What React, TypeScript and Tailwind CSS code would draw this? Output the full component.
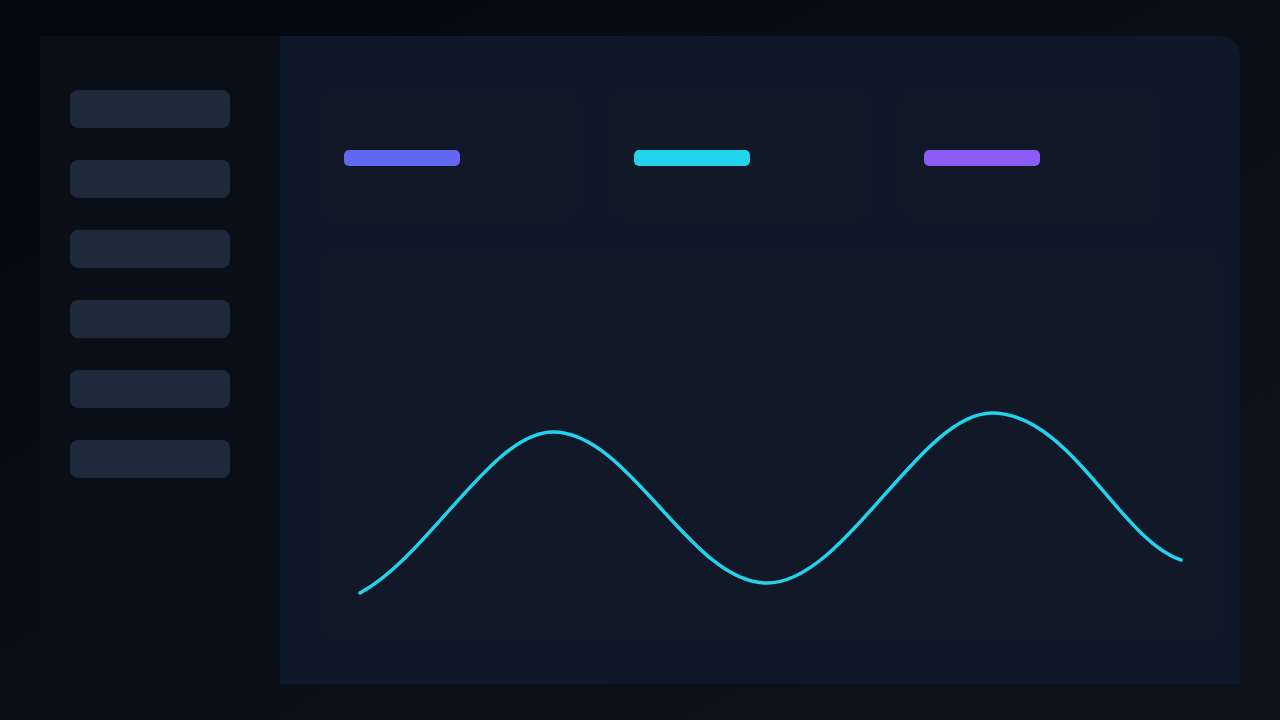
import React from "react";

export default function App() {
  const items = [0, 1, 2, 3, 4, 5];
  const bars = ["bg-[#6366f1]", "bg-[#22d3ee]", "bg-[#8b5cf6]"];
  return (
    <div className="w-[1280px] h-[720px] bg-gradient-to-br from-[#05080f] via-[#0a0e17] to-[#0f131c] pt-[36px] pl-[40px] overflow-hidden" style={{ fontFamily: '"Liberation Sans", sans-serif' }}>
      <div className="flex w-[1200px] h-[648px]">
        <div className="w-[240px] h-full bg-[#0a0e17] pt-[54px] px-[30px] flex flex-col gap-[32px]">
          {items.map((i) => (
            <div key={i} className="h-[38px] w-[160px] rounded-lg bg-[#1e293b]" />
          ))}
        </div>
        <div className="flex-1 h-full bg-[#0f172a] rounded-tr-[20px] pt-[54px] pl-[40px] pr-[20px] flex flex-col">
          <div className="flex gap-[30px]">
            {bars.map((b, i) => (
              <div key={i} className="w-[260px] h-[130px] rounded-2xl bg-[#111827] pt-[60px] pl-[24px]">
                <div className={`w-[116px] h-[16px] rounded-[5px] ${b}`} />
              </div>
            ))}
          </div>
          <div className="mt-[30px] w-[900px] h-[390px] rounded-2xl bg-[#111827]">
            <svg width="900" height="390" viewBox="0 0 900 390">
              <path
                d="M40 343 C 110 305, 172 182, 233 182 C 310 182, 370 333, 447 333 C 525 333, 600 163, 672 163 C 750 163, 800 290, 861 310"
                fill="none"
                stroke="#22d3ee"
                strokeWidth="3.5"
                strokeLinecap="round"
              />
            </svg>
          </div>
        </div>
      </div>
    </div>
  );
}
